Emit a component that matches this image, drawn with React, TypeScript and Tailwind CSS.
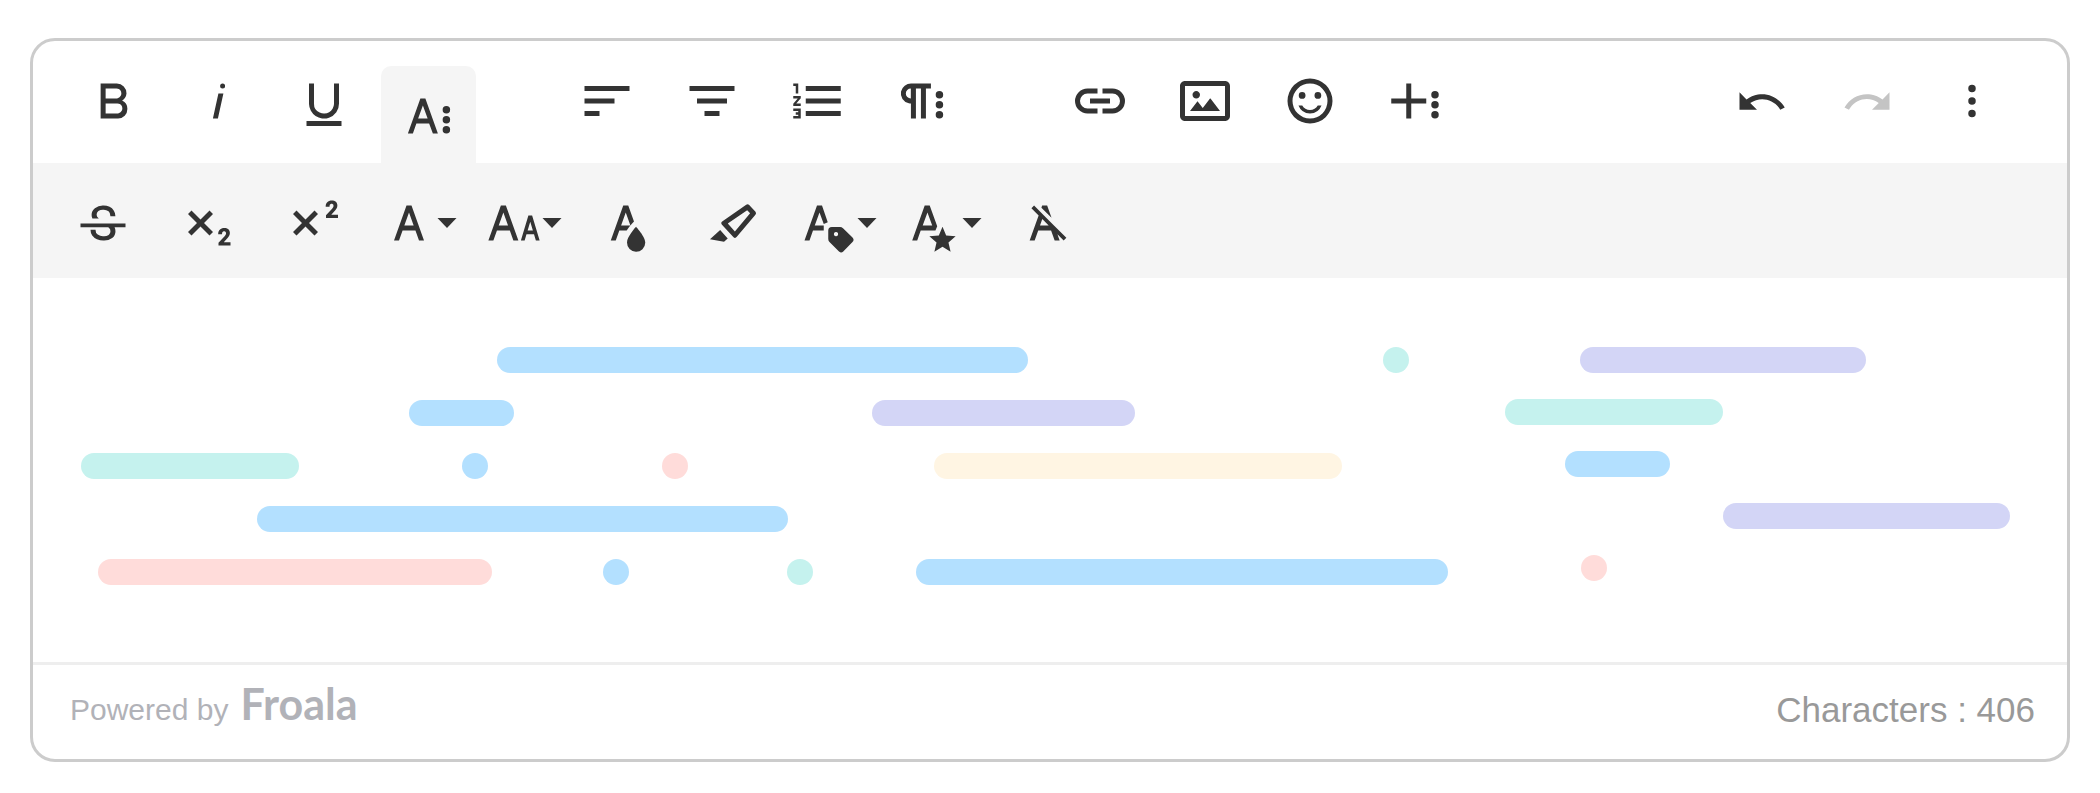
import React from "react";

const ICONS = {
  bold: "M15.25,11.8h0A3.68,3.68,0,0,0,17,9a3.93,3.93,0,0,0-3.86-4H6.65V19h7a3.74,3.74,0,0,0,3.7-3.78V15.1A3.64,3.64,0,0,0,15.25,11.8ZM8.65,7h4.2a2.09,2.09,0,0,1,2,1.3,2.09,2.09,0,0,1-1.37,2.61,2.23,2.23,0,0,1-.63.09H8.65Zm4.6,10H8.65V13h4.6a2.09,2.09,0,0,1,2,1.3,2.09,2.09,0,0,1-1.37,2.61A2.23,2.23,0,0,1,13.25,17Z",
  italic: "M11.76,9h2l-2.2,10h-2Zm1.68-4a1,1,0,1,0,1,1,1,1,0,0,0-1-1Z",
  underline: "M19,20v2H5V20Zm-3-6.785a4,4,0,0,1-5.74,3.4A3.75,3.75,0,0,1,8,13.085V5.005H6v8.21a6,6,0,0,0,8,5.44,5.851,5.851,0,0,0,4-5.65v-8H16ZM16,5v0h2V5ZM8,5H6v0H8Z",
  textMore: "M13.55,19h2l-5-14h-2l-5,14h2l1.4-4h5.1Zm-5.9-6,1.9-5.2,1.9,5.2Zm12.8,4.5a1.5,1.5,0,1,1-1.5-1.5A1.5,1.5,0,0,1,20.45,17.5Zm0-4a1.5,1.5,0,1,1-1.5-1.5A1.5,1.5,0,0,1,20.45,13.5Zm0-4a1.5,1.5,0,1,1-1.5-1.5A1.5,1.5,0,0,1,20.45,9.5Z",
  alignLeft: "M3,18h6v-2H3V18z M3,11v2h12v-2H3z M3,6v2h18V6H3z",
  alignCenter: "M9,18h6v-2H9V18z M6,11v2h12v-2H6z M3,6v2h18V6H3z",
  orderedList: "M2.5,16h2v.5h-1v1h1V18h-2v1h3V15h-3Zm1-7h1V5h-2V6h1Zm-1,2H4.3L2.5,13.1V14h3V13H3.7l1.8-2.1V10h-3Zm5-5V8h14V6Zm0,12h14V16H7.5Zm0-5h14V11H7.5Z",
  paragraphMore: "M7.682,5a4.11,4.11,0,0,0-4.07,3.18,4,4,0,0,0,3.11,4.725h0l.027.005a3.766,3.766,0,0,0,.82.09v6h2V7h2V19h2V7h2V5ZM5.532,9a2,2,0,0,1,2-2v4A2,2,0,0,1,5.532,9Zm14.94,8.491a1.5,1.5,0,1,1-1.5-1.5A1.5,1.5,0,0,1,20.472,17.491Zm0-4a1.5,1.5,0,1,1-1.5-1.5A1.5,1.5,0,0,1,20.472,13.491Zm0-4a1.5,1.5,0,1,1-1.5-1.5A1.5,1.5,0,0,1,20.472,9.491Z",
  link: "M11,17H7A5,5,0,0,1,7,7h4V9H7a3,3,0,0,0,0,6h4ZM17,7H13V9h4a3,3,0,0,1,0,6H13v2h4A5,5,0,0,0,17,7Zm-1,4H8v2h8Z",
  image: "M14.2,11l3.8,5H6l3-3.9l2.1,2.7L14,11H14.2z M8.5,11c0.8,0,1.5-0.7,1.5-1.5S9.3,8,8.5,8S7,8.7,7,9.5C7,10.3,7.7,11,8.5,11z M22,6v12c0,1.1-0.9,2-2,2H4c-1.1,0-2-0.9-2-2V6c0-1.1,0.9-2,2-2h16C21.1,4,22,4.9,22,6z M20,8.8V6H4v12h16V8.8z",
  emoticon: "M11.991,3A9,9,0,1,0,21,12,8.99557,8.99557,0,0,0,11.991,3ZM12,19a7,7,0,1,1,7-7A6.99808,6.99808,0,0,1,12,19Zm3.105-5.2h1.504a4.94542,4.94542,0,0,1-9.218,0H8.895a3.57808,3.57808,0,0,0,6.21,0ZM7.5,9.75A1.35,1.35,0,1,1,8.85,11.1,1.35,1.35,0,0,1,7.5,9.75Zm6.3,0a1.35,1.35,0,1,1,1.35,1.35A1.35,1.35,0,0,1,13.8,9.75Z",
  richMore: "M16.5,13h-6v6h-2V13h-6V11h6V5h2v6h6Zm5,4.5A1.5,1.5,0,1,1,20,16,1.5,1.5,0,0,1,21.5,17.5Zm0-4A1.5,1.5,0,1,1,20,12,1.5,1.5,0,0,1,21.5,13.5Zm0-4A1.5,1.5,0,1,1,20,8,1.5,1.5,0,0,1,21.5,9.5Z",
  undo: "M10.4,9.4c-1.7,0.3-3.2,0.9-4.6,2L3,8.5v7h7l-2.7-2.7c3.7-2.6,8.8-1.8,11.5,1.9c0.2,0.2,0.3,0.5,0.5,0.8l1.8-0.9C18.9,10.8,14.7,8.7,10.4,9.4z",
  redo: "M13.6,9.4c1.7,0.3,3.2,0.9,4.6,2L21,8.5v7h-7l2.7-2.7C13,10.1,7.9,11,5.3,14.7c-0.2,0.3-0.4,0.5-0.5,0.8L3,14.6C5.1,10.8,9.3,8.7,13.6,9.4z",
  miscMore: "M13.5,17a1.5,1.5,0,1,1-3,0a1.5,1.5,0,0,1,3,0z M13.5,12a1.5,1.5,0,1,1-3,0a1.5,1.5,0,0,1,3,0z M13.5,7a1.5,1.5,0,1,1-3,0a1.5,1.5,0,0,1,3,0z",
  strike: "M3,12.20294H21v1.5H16.63422a3.59782,3.59782,0,0,1,.34942,1.5929,3.252,3.252,0,0,1-1.31427,2.6997A5.55082,5.55082,0,0,1,12.20251,19a6.4421,6.4421,0,0,1-2.62335-.539,4.46335,4.46335,0,0,1-1.89264-1.48816,3.668,3.668,0,0,1-.67016-2.15546V14.704h.28723v-.0011h.34149v.0011H9.02v.11334a2.18275,2.18275,0,0,0,.85413,1.83069,3.69,3.69,0,0,0,2.32836.67926,3.38778,3.38778,0,0,0,2.07666-.5462,1.73346,1.73346,0,0,0,.7013-1.46655,1.69749,1.69749,0,0,0-.647-1.43439,3.00525,3.00525,0,0,0-.27491-.17725H3ZM16.34473,7.05981A4.18163,4.18163,0,0,0,14.6236,5.5462,5.627,5.627,0,0,0,12.11072,5,5.16083,5.16083,0,0,0,8.74719,6.06213,3.36315,3.36315,0,0,0,7.44006,8.76855a3.22923,3.22923,0,0,0,.3216,1.42786h2.59668c-.08338-.05365-.18537-.10577-.25269-.16064a1.60652,1.60652,0,0,1-.65283-1.30036,1.79843,1.79843,0,0,1,.68842-1.5108,3.12971,3.12971,0,0,1,1.96948-.55243,3.04779,3.04779,0,0,1,2.106.6687,2.35066,2.35066,0,0,1,.736,1.83258v.11341h2.00317V9.17346A3.90013,3.90013,0,0,0,16.34473,7.05981Z",
  subscript: "M10.4,12l3.6,3.6L12.6,17L9,13.4L5.4,17L4,15.6L7.6,12L4,8.4L5.4,7L9,10.6L12.6,7L14,8.4L10.4,12z M18.31,19.674l1.068-1.1465c0.196-0.201,0.371-0.407,0.537-0.609c0.16-0.194,0.304-0.4,0.432-0.617c0.12-0.2,0.218-0.412,0.293-0.633c0.071-0.215,0.107-0.44,0.107-0.666c0.003-0.281-0.049-0.561-0.153-0.822c-0.099-0.246-0.253-0.465-0.45-0.642c-0.21-0.184-0.455-0.322-0.721-0.406c-0.638-0.19-1.32-0.174-1.949,0.045c-0.287,0.108-0.547,0.277-0.764,0.495c-0.209,0.209-0.371,0.459-0.475,0.735c-0.1,0.266-0.153,0.548-0.156,0.833l-0.004,0.237H17.617l0.006-0.227c0.002-0.127,0.02-0.253,0.054-0.375c0.033-0.107,0.087-0.207,0.157-0.294c0.071-0.08,0.16-0.143,0.259-0.184c0.225-0.089,0.474-0.094,0.702-0.015c0.082,0.036,0.156,0.09,0.215,0.157c0.061,0.072,0.107,0.154,0.138,0.243c0.036,0.108,0.054,0.221,0.055,0.335c-0.001,0.09-0.012,0.179-0.032,0.266c-0.029,0.104-0.071,0.205-0.124,0.299c-0.077,0.136-0.165,0.266-0.263,0.388c-0.134,0.175-0.278,0.342-0.429,0.502l-2.156,2.353V21H21v-1.326H18.31z",
  superscript: "M10.4,12l3.6,3.6L12.6,17L9,13.4L5.4,17L4,15.6L7.6,12L4,8.4L5.4,7L9,10.6L12.6,7L14,8.4L10.4,12z M19.31,8.674l1.068-1.1465c0.196-0.201,0.371-0.407,0.537-0.609c0.16-0.194,0.304-0.4,0.432-0.617c0.12-0.2,0.218-0.412,0.293-0.633c0.071-0.215,0.107-0.44,0.107-0.666c0.003-0.281-0.049-0.561-0.153-0.822c-0.099-0.246-0.253-0.465-0.45-0.642c-0.21-0.184-0.455-0.322-0.721-0.406c-0.638-0.19-1.32-0.174-1.949,0.045c-0.287,0.108-0.547,0.277-0.764,0.495c-0.209,0.209-0.371,0.459-0.475,0.735c-0.1,0.266-0.153,0.548-0.156,0.833l-0.004,0.237H18.617l0.006-0.227c0.002-0.127,0.02-0.253,0.054-0.375c0.033-0.107,0.087-0.207,0.157-0.294c0.071-0.08,0.16-0.143,0.259-0.184c0.225-0.089,0.474-0.094,0.702-0.015c0.082,0.036,0.156,0.09,0.215,0.157c0.061,0.072,0.107,0.154,0.138,0.243c0.036,0.108,0.054,0.221,0.055,0.335c-0.001,0.09-0.012,0.179-0.032,0.266c-0.029,0.104-0.071,0.205-0.124,0.299c-0.077,0.136-0.165,0.266-0.263,0.388c-0.134,0.175-0.278,0.342-0.429,0.502l-2.156,2.353V10H22v-1.326H19.31z",
  fontFamily: "M16,19h2L13,5H11L6,19H8l1.43-4h5.15Zm-5.86-6L12,7.8,13.86,13Z",
  fontSize: "M20.75,19h1.5l-3-10h-1.5l-3,10h1.5L17,16.5h3Zm-3.3-4,1.05-3.5L19.55,15Zm-5.7,4h2l-5-14h-2l-5,14h2l1.43-4h5.15ZM5.89,13,7.75,7.8,9.61,13Z",
  textColor: "M15.2,13.494s-3.6,3.9-3.6,6.3a3.65,3.65,0,0,0,7.3.1v-.1C18.9,17.394,15.2,13.494,15.2,13.494Zm-1.47-1.357.669-.724L12.1,5h-2l-5,14h2l1.43-4h2.943A24.426,24.426,0,0,1,13.726,12.137ZM11.1,7.8l1.86,5.2H9.244Z",
  highlight: "M9.91752,12.24082l7.74791-5.39017,1.17942,1.29591-6.094,7.20747L9.91752,12.24082M7.58741,12.652l4.53533,4.98327a.93412.93412,0,0,0,1.39531-.0909L20.96943,8.7314A.90827.90827,0,0,0,20.99075,7.533l-2.513-2.76116a.90827.90827,0,0,0-1.19509-.09132L7.809,11.27135A.93412.93412,0,0,0,7.58741,12.652ZM2.7939,18.52772,8.41126,19.5l1.47913-1.34617-3.02889-3.328Z",
  inlineClass: "M9.9,15V13H6.3L8.2,7.8L9.9,12.4L11.5,11.7L9.2,5H7.2L2.2,19H4.2L5.6,15Z M13.1,13.6H16.3A1.7,1.7,0,0,1,17.6,14.1L21.4,17.8A1.3,1.3,0,0,1,21.4,19.6L17.7,23.4A1.2,1.2,0,0,1,16,23.4L12.2,19.6A1.7,1.7,0,0,1,11.7,18.4V15A1.4,1.4,0,0,1,13.1,13.6Z M14.8,15.6a.85,.85,0,1,0,.01,0Z",
  inlineStyle: "M11.88,15h.7l.7-1.7-3-8.3h-2l-5,14h2l1.4-4Zm-4.4-2,1.9-5.2,1.9,5.2ZM15.4,21.545l3.246,1.949-.861-3.686,2.869-2.487-3.782-.325L15.4,13.508l-1.476,3.488-3.782.325,2.869,2.487-.861,3.686Z",
  clear: "M11.48,10.09l-1.2-1.21L8.8,7.41,6.43,5,5.37,6.1,8.25,9,4.66,19h2l1.43-4h5.14l1.43,4h2l-.89-2.51L18.27,19l1.07-1.06L14.59,13.2ZM8.8,13l.92-2.56L12.27,13Zm.56-7.15L9.66,5h2l1.75,4.9Z",
};

type IconName = keyof typeof ICONS;

function Icon({ name }: { name: IconName }) {
  return (
    <svg viewBox="0 0 24 24" className="size-[60px] shrink-0 overflow-visible" fill="currentColor" fillRule="evenodd" aria-hidden="true">
      <path d={ICONS[name]} />
    </svg>
  );
}

type Tool = { icon: IconName; label: string; menu?: boolean; active?: boolean; disabled?: boolean };

function ToolButton({ icon, label, menu, active, disabled }: Tool) {
  if (active) {
    return (
      <button type="button" aria-label={label} aria-pressed="true" className="flex h-[97px] w-[95px] justify-center rounded-t-[10px] bg-[#f5f5f5] pt-5">
        <Icon name={icon} />
      </button>
    );
  }
  return (
    <button type="button" aria-label={label} disabled={disabled} className="flex h-[70px] w-[95px] items-center justify-center disabled:text-[#c4c4c4]">
      <Icon name={icon} />
      {menu && (
        <svg viewBox="0 0 20 10" className="-ml-0.5 h-2.5 w-5 shrink-0" fill="currentColor" aria-hidden="true">
          <path d="M0.5 0H19.5L10 10Z" />
        </svg>
      )}
    </button>
  );
}

function ToolGroup({ tools }: { tools: Tool[] }) {
  return (
    <div className="flex items-start gap-2.5">
      {tools.map((t) => (
        <ToolButton key={t.label} {...t} />
      ))}
    </div>
  );
}

const TEXT: Tool[] = [
  { icon: "bold", label: "Bold" },
  { icon: "italic", label: "Italic" },
  { icon: "underline", label: "Underline" },
  { icon: "textMore", label: "More text", active: true },
];
const PARAGRAPH: Tool[] = [
  { icon: "alignLeft", label: "Align left" },
  { icon: "alignCenter", label: "Align center" },
  { icon: "orderedList", label: "Ordered list" },
  { icon: "paragraphMore", label: "More paragraph" },
];
const RICH: Tool[] = [
  { icon: "link", label: "Insert link" },
  { icon: "image", label: "Insert image" },
  { icon: "emoticon", label: "Emoticons" },
  { icon: "richMore", label: "More rich" },
];
const MISC: Tool[] = [
  { icon: "undo", label: "Undo" },
  { icon: "redo", label: "Redo", disabled: true },
  { icon: "miscMore", label: "More misc" },
];
const MORE_TEXT: Tool[] = [
  { icon: "strike", label: "Strikethrough" },
  { icon: "subscript", label: "Subscript" },
  { icon: "superscript", label: "Superscript" },
  { icon: "fontFamily", label: "Font family", menu: true },
  { icon: "fontSize", label: "Font size", menu: true },
  { icon: "textColor", label: "Text color" },
  { icon: "highlight", label: "Background color" },
  { icon: "inlineClass", label: "Inline class", menu: true },
  { icon: "inlineStyle", label: "Inline style", menu: true },
  { icon: "clear", label: "Clear formatting" },
];

const FILL = {
  blue: "bg-[#b3e0ff]",
  teal: "bg-[#c5f2ee]",
  violet: "bg-[#d3d5f6]",
  pink: "bg-[#ffdcda]",
  cream: "bg-[#fff5e3]",
};

/* Each bar: colour, space before it, width. Units are shares of the column. */
type Bar = [keyof typeof FILL, number, number];

const MAIN: Bar[][] = [
  [["blue", 464, 531], ["teal", 355, 26]],
  [["blue", 376, 105], ["violet", 358, 263]],
  [["teal", 48, 218], ["blue", 163, 26], ["pink", 174, 26], ["cream", 246, 408]],
  [["blue", 224, 531]],
  [["pink", 65, 394], ["blue", 111, 26], ["teal", 158, 26], ["blue", 103, 532]],
];
const SIDE: Bar[][] = [
  [["violet", 107, 286]],
  [["teal", 32, 218]],
  [["blue", 92, 105]],
  [["violet", 250, 287]],
  [["pink", 108, 26]],
];

function BarColumn({ rows, span, className }: { rows: Bar[][]; span: number; className: string }) {
  return (
    <div className={className}>
      {rows.map((row, i) => (
        <div key={i} className="flex h-[26px]">
          {row.map(([fill, before, width], j) => (
            <span
              key={j}
              className={`h-full shrink-0 rounded-full ${FILL[fill]}`}
              style={{
                marginLeft: `${(before / span) * 100}%`,
                width: width === 26 ? 26 : `${(width / span) * 100}%`,
              }}
            />
          ))}
        </div>
      ))}
    </div>
  );
}

export default function App() {
  return (
    <main className="bg-white px-[30px] pt-[38px] pb-[31px] font-['Liberation_Sans',Arial,sans-serif] text-[#333]">
      <div className="overflow-hidden rounded-[25px] border-3 border-[#ccc] bg-white">
        <div role="toolbar" aria-label="Formatting" className="flex items-start justify-between pt-[25px] pr-[48px] pl-[33px]">
          <div className="flex items-start gap-[83px]">
            <ToolGroup tools={TEXT} />
            <ToolGroup tools={PARAGRAPH} />
            <ToolGroup tools={RICH} />
          </div>
          <ToolGroup tools={MISC} />
        </div>
        <div role="toolbar" aria-label="More text" className="bg-[#f5f5f5] pt-[25px] pb-5 pl-[22px]">
          <ToolGroup tools={MORE_TEXT} />
        </div>
        <div className="flex pt-[69px] pb-[77px]">
          <BarColumn rows={MAIN} span={1440} className="flex w-[1440px] flex-auto flex-col gap-[27px]" />
          <BarColumn rows={SIDE} span={594} className="flex w-[594px] flex-auto flex-col gap-[26px]" />
        </div>
        <footer className="flex items-center justify-between border-t-3 border-[#eee] pt-[21px] pr-8 pb-[25px] pl-[37px]">
          <a href="#froala" className="flex items-baseline gap-3 text-[30px] leading-12 text-[#b1b2b8]">
            Powered by
            <span className="font-[Lato] text-[43px] leading-9 font-bold">Froala</span>
          </a>
          <span className="text-[35px] leading-12 text-[#999]">Characters : 406</span>
        </footer>
      </div>
    </main>
  );
}
